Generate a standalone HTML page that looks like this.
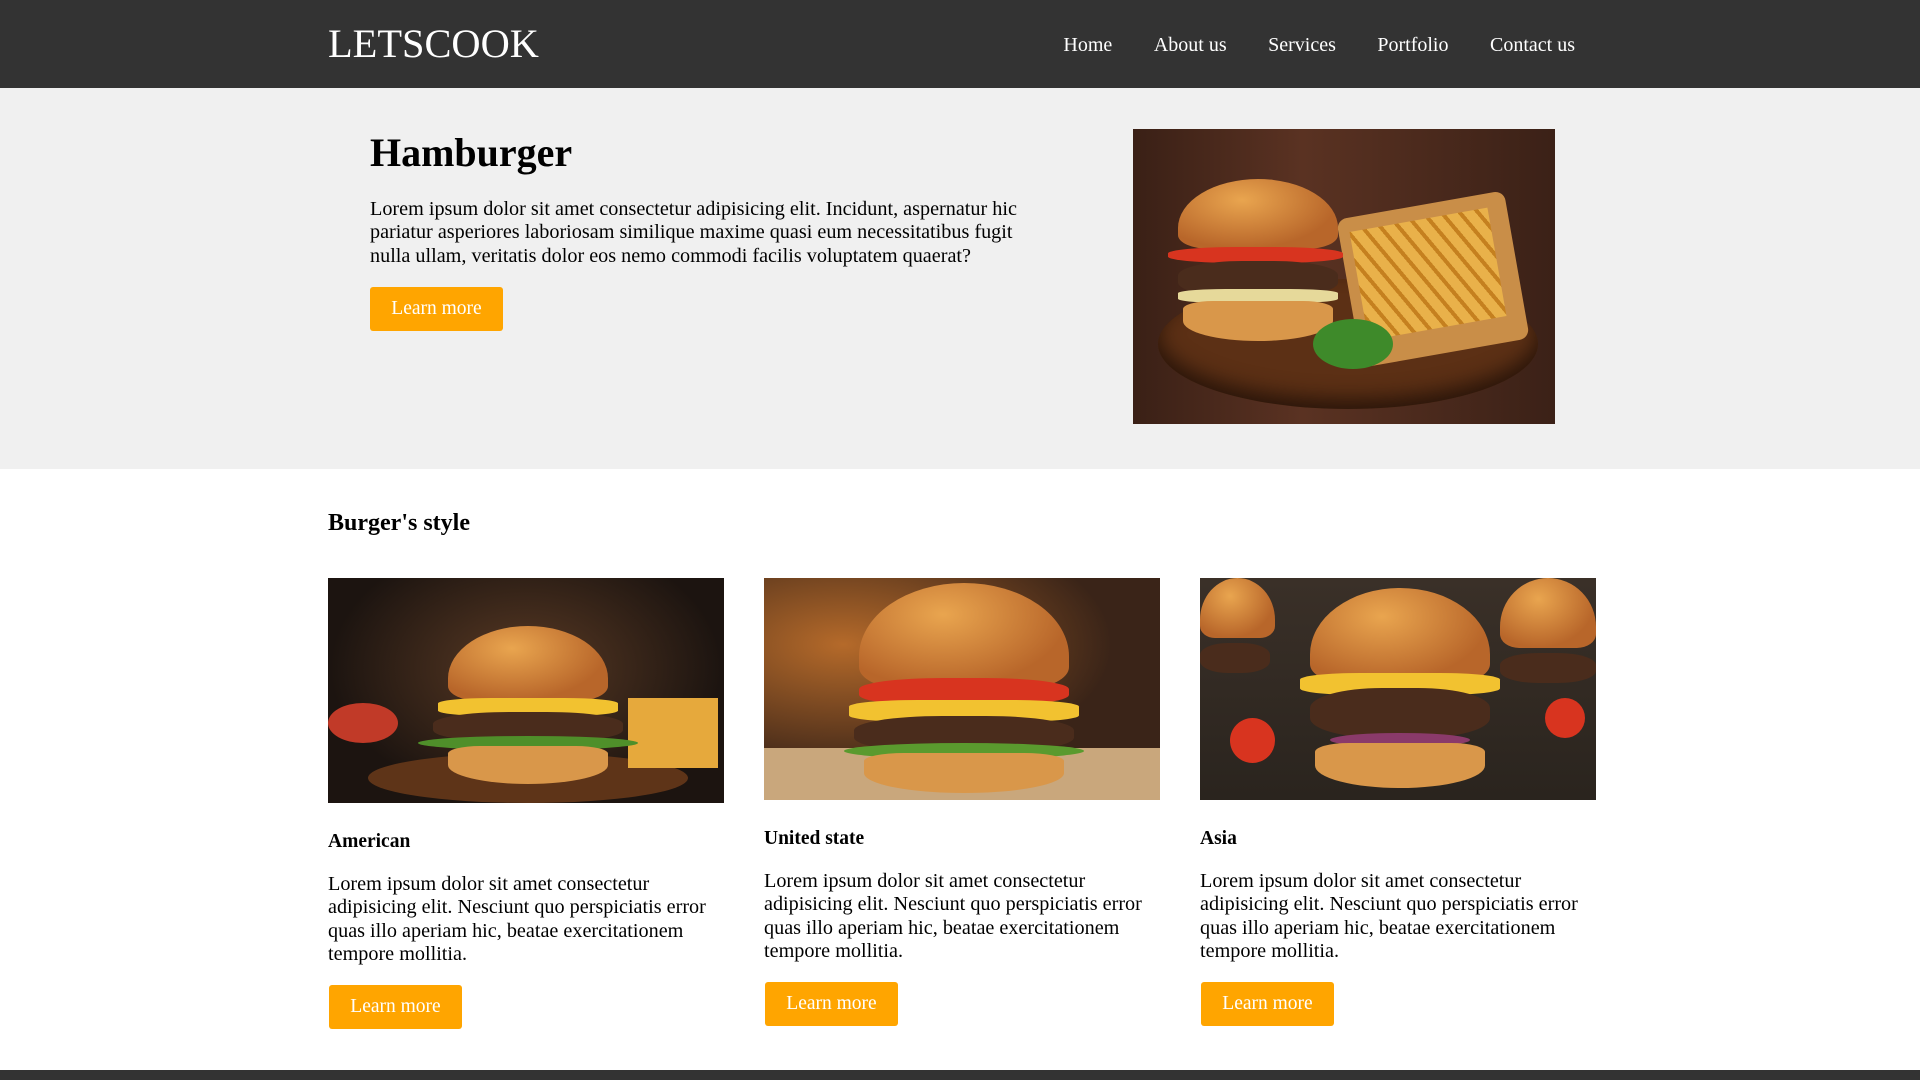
<!DOCTYPE html>
<html><head><meta charset="utf-8"><style>
*{margin:0;padding:0;box-sizing:border-box}
body{width:1920px;height:1080px;overflow:hidden;background:#fff;font-family:"Liberation Serif",serif;color:#000}
header{height:88px;background:#333;position:relative}
.logo{position:absolute;left:328px;top:20px;font-size:40.4px;color:#fff;line-height:48px}
nav{position:absolute;right:345px;top:34px;font-size:20px;color:#fff}
nav span{margin-left:41.5px}
.hero{height:381px;background:#f0f0f0;position:relative}
.hero h1{position:absolute;left:370px;top:129px;font-size:40px;line-height:48px;font-weight:bold}
.hero p{position:absolute;left:370px;top:196px;width:680px;font-size:20.2px;line-height:23.3px}
.btn{position:absolute;background:#ffa500;color:#fff;font-size:19.5px;width:133px;height:44px;line-height:44px;text-align:center;border-radius:3px}
.img{position:absolute;overflow:hidden}
h2{position:absolute;left:328px;top:510px;font-size:24px;font-weight:bold}
h3{position:absolute;font-size:19.5px;font-weight:bold}
.cp{position:absolute;width:400px;font-size:20.2px;line-height:23.3px}
footer{position:absolute;left:0;top:1070px;width:1920px;height:10px;background:#333}
.bun{position:absolute;border-radius:50% 50% 20% 20%/70% 70% 20% 20%;background:radial-gradient(ellipse at 40% 30%,#e9a54f,#b8662a 70%)}
.patty{position:absolute;border-radius:40%;background:#4a2c1c}
.chz{position:absolute;background:#f2c230;border-radius:30%}
.red{position:absolute;background:#d8341f;border-radius:40%}
.bot{position:absolute;border-radius:20% 20% 50% 50%;background:#d9974a}
</style></head><body>
<header><div class="logo">LETSCOOK</div>
<nav><span>Home</span><span>About us</span><span>Services</span><span>Portfolio</span><span>Contact us</span></nav></header>
<div class="hero">
<h1 style="top:41px">Hamburger</h1>
<p style="top:110px">Lorem ipsum dolor sit amet consectetur adipisicing elit. Incidunt, aspernatur hic pariatur asperiores laboriosam similique maxime quasi eum necessitatibus fugit nulla ullam, veritatis dolor eos nemo commodi facilis voluptatem quaerat?</p>
<div class="btn" style="left:370px;top:199px">Learn more</div>
<div class="img" style="left:1133px;top:41px;width:422px;height:295px;background:linear-gradient(90deg,#3a2016,#5a3222 40%,#3b2117)">
 <div style="position:absolute;left:25px;top:150px;width:380px;height:130px;border-radius:50%;background:#5c3015;box-shadow:inset 0 -10px 20px #2a150a"></div>
 <div style="position:absolute;left:215px;top:75px;width:170px;height:150px;background:#c98e48;transform:rotate(-10deg);border-radius:10px"></div>
 <div style="position:absolute;left:225px;top:90px;width:140px;height:110px;background:repeating-linear-gradient(60deg,#e9b14a 0 10px,#c5801f 10px 14px);transform:rotate(-10deg)"></div>
 <div class="bun" style="left:45px;top:50px;width:160px;height:70px"></div>
 <div class="red" style="left:35px;top:118px;width:175px;height:16px"></div>
 <div class="patty" style="left:45px;top:132px;width:160px;height:36px"></div>
 <div class="chz" style="left:45px;top:160px;width:160px;height:14px;background:#e6d99a"></div>
 <div class="bot" style="left:50px;top:172px;width:150px;height:40px"></div>
 <div style="position:absolute;left:180px;top:190px;width:80px;height:50px;border-radius:50%;background:#3e8a2a"></div>
</div>
</div>
<h2>Burger's style</h2>
<div class="img" style="left:328px;top:578px;width:396px;height:225px;background:radial-gradient(ellipse at 50% 40%,#5a3a24,#1c1410 70%)">
 <div style="position:absolute;left:40px;top:175px;width:320px;height:50px;border-radius:50%;background:#5e3418"></div>
 <div style="position:absolute;left:300px;top:120px;width:90px;height:70px;background:#e6a93c"></div>
 <div style="position:absolute;left:0;top:125px;width:70px;height:40px;border-radius:50%;background:#c13a28"></div>
 <div class="bun" style="left:120px;top:48px;width:160px;height:75px"></div>
 <div class="chz" style="left:110px;top:120px;width:180px;height:18px"></div>
 <div class="patty" style="left:105px;top:134px;width:190px;height:30px"></div>
 <div style="position:absolute;left:90px;top:158px;width:220px;height:14px;border-radius:50%;background:#4f8f2a"></div>
 <div class="bot" style="left:120px;top:168px;width:160px;height:38px"></div>
</div>
<div class="img" style="left:764px;top:578px;width:396px;height:222px;background:radial-gradient(ellipse at 20% 30%,#b56a2a,#3a2418 60%)">
 <div style="position:absolute;left:0;top:170px;width:396px;height:60px;background:#c9a77c"></div>
 <div class="bun" style="left:95px;top:5px;width:210px;height:105px"></div>
 <div class="red" style="left:95px;top:100px;width:210px;height:28px"></div>
 <div class="chz" style="left:85px;top:122px;width:230px;height:22px"></div>
 <div class="patty" style="left:90px;top:138px;width:220px;height:36px"></div>
 <div style="position:absolute;left:80px;top:165px;width:240px;height:16px;border-radius:50%;background:#5a9a2e"></div>
 <div class="bot" style="left:100px;top:175px;width:200px;height:40px"></div>
</div>
<div class="img" style="left:1200px;top:578px;width:396px;height:222px;background:linear-gradient(180deg,#3a3028,#2a241e)">
 <div class="bun" style="left:0;top:0;width:75px;height:60px"></div>
 <div class="patty" style="left:0;top:65px;width:70px;height:30px"></div>
 <div class="bun" style="left:300px;top:0;width:96px;height:70px"></div>
 <div class="patty" style="left:300px;top:75px;width:96px;height:30px"></div>
 <div class="bun" style="left:110px;top:10px;width:180px;height:95px"></div>
 <div class="chz" style="left:100px;top:95px;width:200px;height:22px"></div>
 <div class="patty" style="left:110px;top:110px;width:180px;height:50px"></div>
 <div style="position:absolute;left:130px;top:155px;width:140px;height:14px;border-radius:50%;background:#8a3a6a"></div>
 <div class="bot" style="left:115px;top:165px;width:170px;height:45px"></div>
 <div class="red" style="left:30px;top:140px;width:45px;height:45px;border-radius:50%"></div>
 <div class="red" style="left:345px;top:120px;width:40px;height:40px;border-radius:50%"></div>
</div>
<h3 style="left:328px;top:831px">American</h3>
<h3 style="left:764px;top:828px">United state</h3>
<h3 style="left:1200px;top:828px">Asia</h3>
<p class="cp" style="left:328px;top:873px">Lorem ipsum dolor sit amet consectetur adipisicing elit. Nesciunt quo perspiciatis error quas illo aperiam hic, beatae exercitationem tempore mollitia.</p>
<p class="cp" style="left:764px;top:870px">Lorem ipsum dolor sit amet consectetur adipisicing elit. Nesciunt quo perspiciatis error quas illo aperiam hic, beatae exercitationem tempore mollitia.</p>
<p class="cp" style="left:1200px;top:870px">Lorem ipsum dolor sit amet consectetur adipisicing elit. Nesciunt quo perspiciatis error quas illo aperiam hic, beatae exercitationem tempore mollitia.</p>
<div class="btn" style="left:329px;top:985px">Learn more</div>
<div class="btn" style="left:765px;top:982px">Learn more</div>
<div class="btn" style="left:1201px;top:982px">Learn more</div>
<footer></footer>
</body></html>
